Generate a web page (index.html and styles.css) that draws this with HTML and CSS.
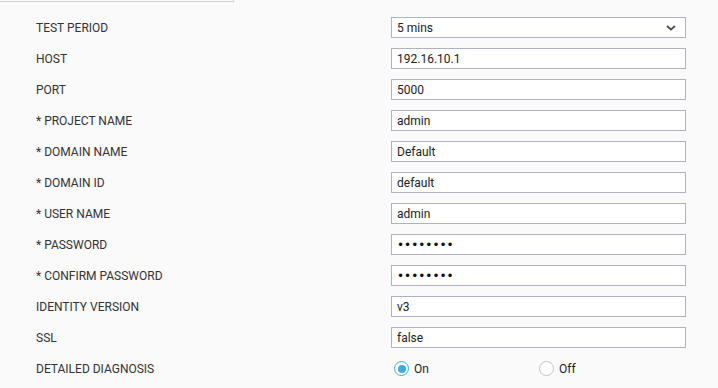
FILE: index.html
```html
<!DOCTYPE html>
<html lang="en">
<head>
    <meta charset="UTF-8">
    <meta name="viewport" content="width=device-width, initial-scale=1.0">
    <title>Test Settings</title>
    <link rel="stylesheet" href="styles.css">
</head>
<body>
    <div class="top-box"></div>

    <form class="settings">
        <label class="field-label" for="period">TEST PERIOD</label>
        <div class="select-wrap">
            <select id="period" class="field">
                <option>5 mins</option>
                <option>10 mins</option>
                <option>15 mins</option>
            </select>
            <svg class="chevron" width="10" height="6" viewBox="0 0 10 6">
                <path d="M1 1 L5 4.5 L9 1" fill="none" stroke="#555" stroke-width="2"/>
            </svg>
        </div>

        <label class="field-label" for="host">HOST</label>
        <input class="field" type="text" id="host" value="192.16.10.1">

        <label class="field-label" for="port">PORT</label>
        <input class="field" type="text" id="port" value="5000">

        <label class="field-label" for="project">* PROJECT NAME</label>
        <input class="field" type="text" id="project" value="admin">

        <label class="field-label" for="domain">* DOMAIN NAME</label>
        <input class="field" type="text" id="domain" value="Default">

        <label class="field-label" for="domainId">* DOMAIN ID</label>
        <input class="field" type="text" id="domainId" value="default">

        <label class="field-label" for="user">* USER NAME</label>
        <input class="field" type="text" id="user" value="admin">

        <label class="field-label" for="password">* PASSWORD</label>
        <input class="field" type="password" id="password" value="admin123">

        <label class="field-label" for="confirm">* CONFIRM PASSWORD</label>
        <input class="field" type="password" id="confirm" value="admin123">

        <label class="field-label" for="identity">IDENTITY VERSION</label>
        <input class="field" type="text" id="identity" value="v3">

        <label class="field-label" for="ssl">SSL</label>
        <input class="field" type="text" id="ssl" value="false">

        <span class="field-label">DETAILED DIAGNOSIS</span>
        <div class="radio-group">
            <label class="radio checked"><span class="dot"></span>On</label>
            <label class="radio"><span class="dot"></span>Off</label>
        </div>
    </form>
</body>
</html>
```

FILE: styles.css
```css
body { margin: 0; background: #fafafa; font-family: Roboto, "Liberation Sans", sans-serif; font-size: 12px; color: #222; }
.top-box { width: 233px; height: 1px; border-bottom: 1px solid #cfcfcf; border-right: 1px solid #cfcfcf; }
.settings { display: grid; grid-template-columns: 355px 295px; grid-auto-rows: 31px; padding: 10px 0 0 36px; align-items: center; }
.field-label { color: #333; font-size: 12px; }
.field { box-sizing: border-box; width: 295px; height: 21px; margin: 0; padding: 0 5px; border: 1px solid #adb3c2; border-radius: 0; background: #fff; font-family: inherit; font-size: 12px; color: #222; outline: none; }
input[type=password] { font-family: "DejaVu Sans", sans-serif; font-size: 12px; color: #111; }
.select-wrap { position: relative; width: 295px; height: 21px; }
.select-wrap select { appearance: none; -webkit-appearance: none; }
.chevron { position: absolute; right: 10px; top: 8px; pointer-events: none; }
.radio-group { display: flex; padding-left: 3px; }
.radio { display: flex; align-items: center; width: 145px; color: #222; font-size: 12px; }
.dot { box-sizing: border-box; width: 15px; height: 15px; border: 1px solid #bfc4cc; border-radius: 50%; background: #fff; margin-right: 5px; display: flex; align-items: center; justify-content: center; }
.radio.checked .dot { border-color: #3aaee0; }
.radio.checked .dot::after { content: ""; width: 8px; height: 8px; border-radius: 50%; background: #3aaee0; }
```
